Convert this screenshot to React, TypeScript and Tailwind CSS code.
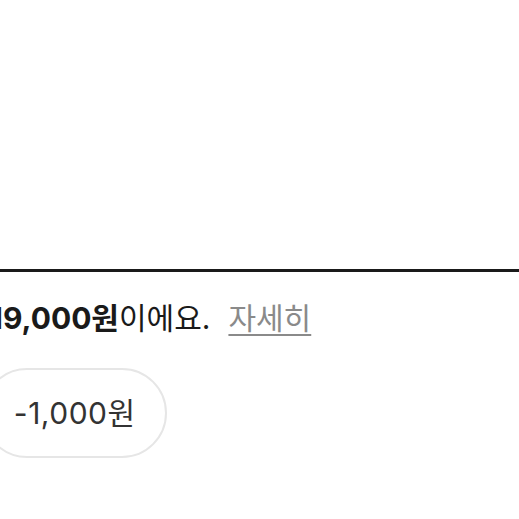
export default function App() {
  return (
    <div className="w-[519px] h-[519px] bg-white overflow-hidden" style={{ fontFamily: 'Inter, "Noto Sans CJK KR", sans-serif' }}>
      <div className="h-[269px]" />
      <div className="h-[3px] bg-[#1a1a1a] w-full" />
      <div className="mt-[25px] -ml-[10px] flex items-center whitespace-nowrap text-[30px] leading-[42px] text-[#1a1a1a]">
        <span className="font-bold">19,000원</span>
        <span>이에요.</span>
        <span className="ml-[18px] text-[#8a8a8a] underline underline-offset-[5px] decoration-[2px]">자세히</span>
      </div>
      <div className="mt-[29px] -ml-[18px] w-[185px] h-[90px] rounded-full border-[2.5px] border-[#e6e6e6] flex items-center justify-center text-[30px] text-[#333333]">
        <span className="tracking-[0.5px]">-1,000</span>
        <span>원</span>
      </div>
    </div>
  );
}
